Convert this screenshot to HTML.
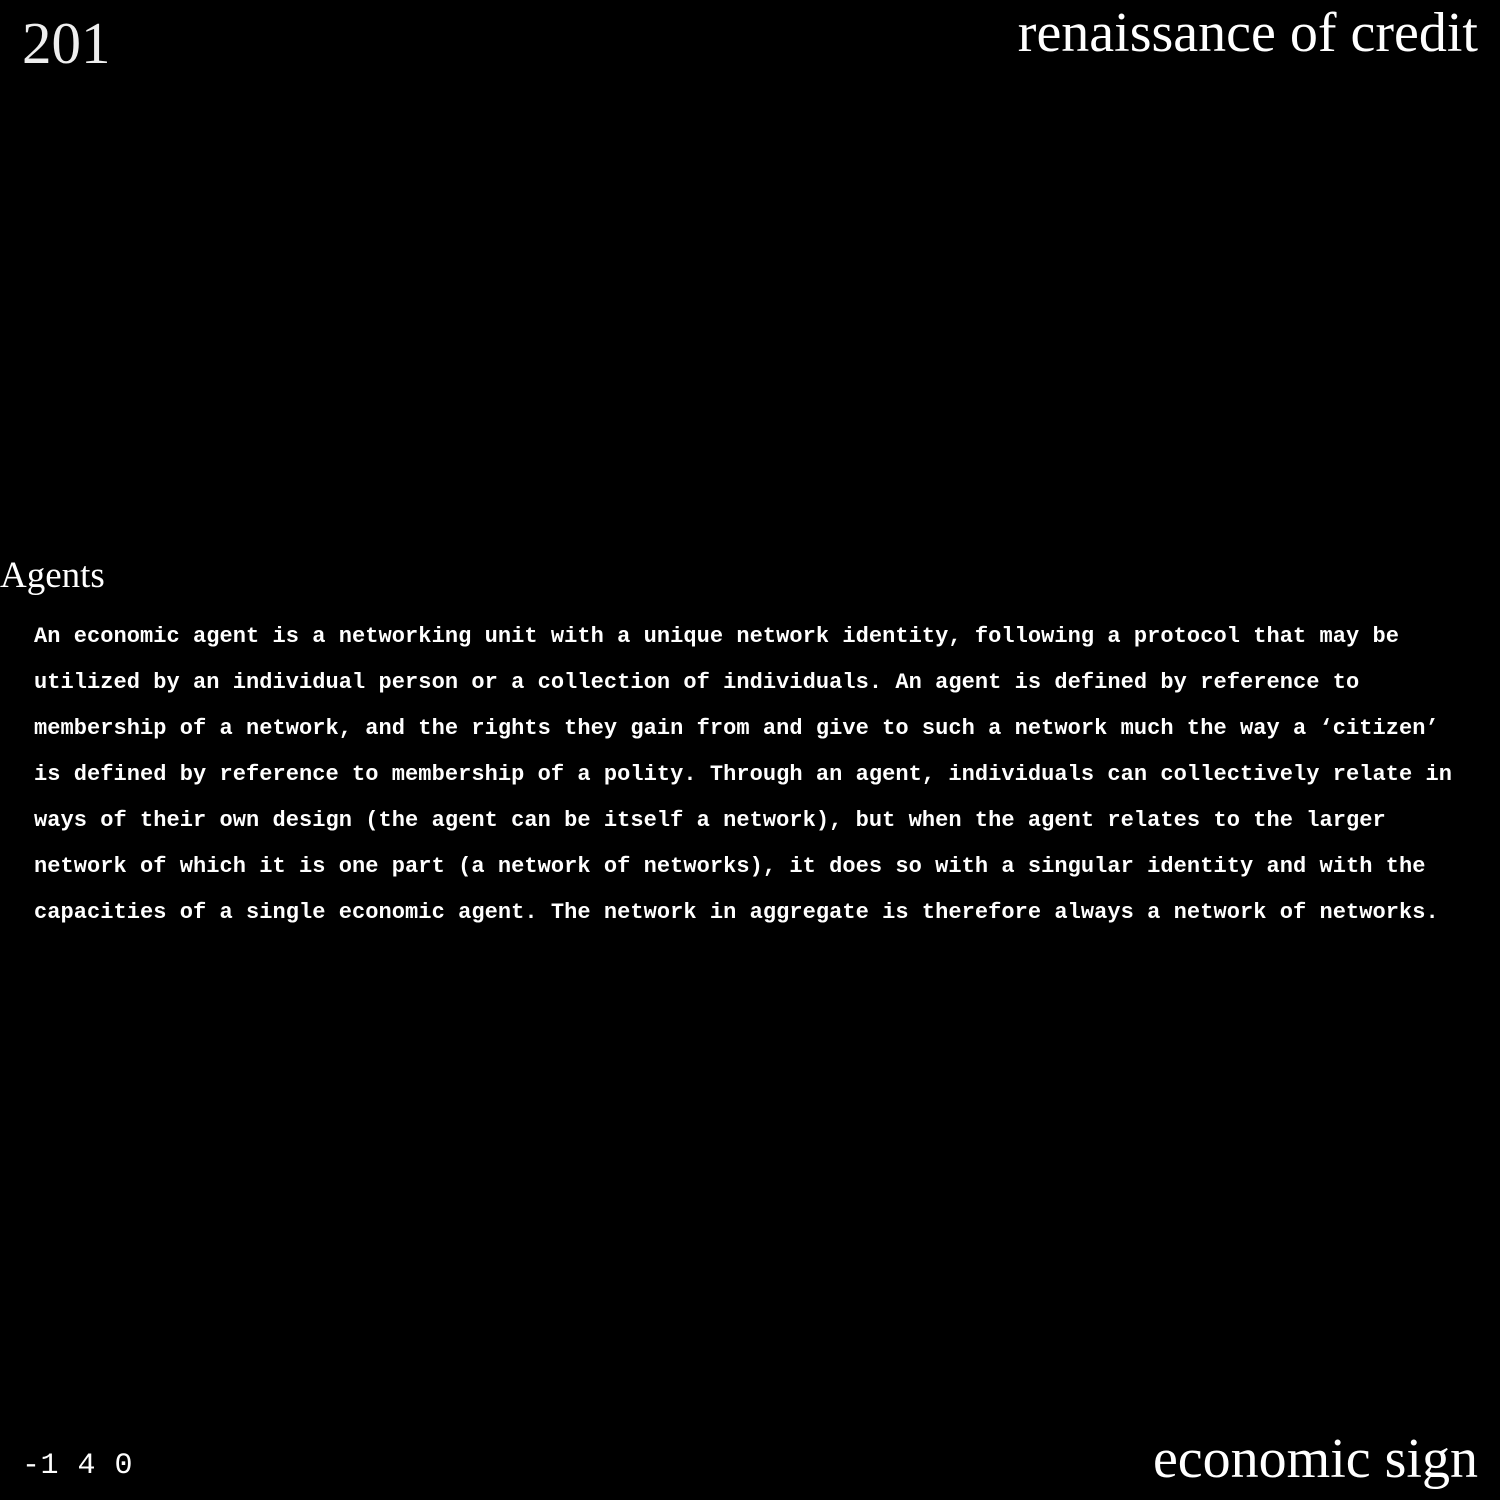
<!DOCTYPE html>
<html><head><meta charset="utf-8"><style>
html,body{margin:0;width:1500px;height:1500px;background:#000;overflow:hidden;color:#fff}
.a{position:absolute;white-space:nowrap}
.serif{font-family:"Liberation Serif",serif}
.mono{font-family:"Liberation Mono",monospace}
p{margin:0}
</style></head><body>
<div class="a serif" style="left:22px;top:10px;font-size:59px;line-height:66px;color:#eee">201</div>
<div class="a serif" style="right:22px;top:0px;font-size:56px;line-height:66px">renaissance of credit</div>
<div class="a serif" style="left:0;top:553px;font-size:37px;line-height:46px">Agents</div>
<div class="a mono" style="left:34px;top:614px;font-size:22px;line-height:46px;font-weight:bold;letter-spacing:0.05px">
An economic agent is a networking unit with a unique network identity, following a protocol that may be<br>
utilized by an individual person or a collection of individuals. An agent is defined by reference to<br>
membership of a network, and the rights they gain from and give to such a network much the way a ‘citizen’<br>
is defined by reference to membership of a polity. Through an agent, individuals can collectively relate in<br>
ways of their own design (the agent can be itself a network), but when the agent relates to the larger<br>
network of which it is one part (a network of networks), it does so with a singular identity and with the<br>
capacities of a single economic agent. The network in aggregate is therefore always a network of networks.
</div>
<div class="a mono" style="left:22px;top:1446px;font-size:30px;line-height:40px;letter-spacing:0.5px">-1 4 0</div>
<div class="a serif" style="right:22px;top:1426px;font-size:56px;line-height:66px">economic sign</div>
</body></html>
